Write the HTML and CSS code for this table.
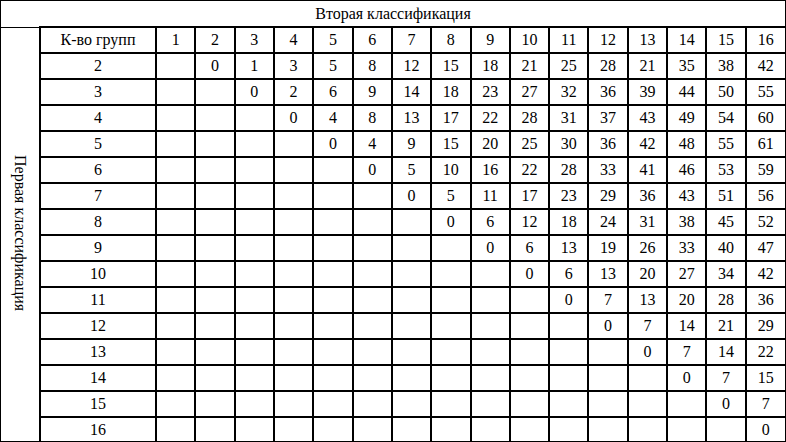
FILE: index.html
```html
<!DOCTYPE html>
<html lang="ru">
<head>
<meta charset="utf-8">
<title>Классификация</title>
<link rel="stylesheet" href="styles.css">
</head>
<body>
<div class="frame">
<table class="grid">
<colgroup>
<col class="c-side"><col class="c-head">
<col><col><col><col><col><col><col><col><col><col><col><col><col><col><col><col>
</colgroup>
<tr class="title-row"><th colspan="18" class="title">Вторая классификация</th></tr>
<tr><td rowspan="17" class="side"><span class="vert">Первая классификация</span></td>
<td>К-во групп</td><td>1</td><td>2</td><td>3</td><td>4</td><td>5</td><td>6</td><td>7</td><td>8</td><td>9</td><td>10</td><td>11</td><td>12</td><td>13</td><td>14</td><td>15</td><td>16</td></tr>
<tr><td>2</td><td></td><td>0</td><td>1</td><td>3</td><td>5</td><td>8</td><td>12</td><td>15</td><td>18</td><td>21</td><td>25</td><td>28</td><td>21</td><td>35</td><td>38</td><td>42</td></tr>
<tr><td>3</td><td></td><td></td><td>0</td><td>2</td><td>6</td><td>9</td><td>14</td><td>18</td><td>23</td><td>27</td><td>32</td><td>36</td><td>39</td><td>44</td><td>50</td><td>55</td></tr>
<tr><td>4</td><td></td><td></td><td></td><td>0</td><td>4</td><td>8</td><td>13</td><td>17</td><td>22</td><td>28</td><td>31</td><td>37</td><td>43</td><td>49</td><td>54</td><td>60</td></tr>
<tr><td>5</td><td></td><td></td><td></td><td></td><td>0</td><td>4</td><td>9</td><td>15</td><td>20</td><td>25</td><td>30</td><td>36</td><td>42</td><td>48</td><td>55</td><td>61</td></tr>
<tr><td>6</td><td></td><td></td><td></td><td></td><td></td><td>0</td><td>5</td><td>10</td><td>16</td><td>22</td><td>28</td><td>33</td><td>41</td><td>46</td><td>53</td><td>59</td></tr>
<tr><td>7</td><td></td><td></td><td></td><td></td><td></td><td></td><td>0</td><td>5</td><td>11</td><td>17</td><td>23</td><td>29</td><td>36</td><td>43</td><td>51</td><td>56</td></tr>
<tr><td>8</td><td></td><td></td><td></td><td></td><td></td><td></td><td></td><td>0</td><td>6</td><td>12</td><td>18</td><td>24</td><td>31</td><td>38</td><td>45</td><td>52</td></tr>
<tr><td>9</td><td></td><td></td><td></td><td></td><td></td><td></td><td></td><td></td><td>0</td><td>6</td><td>13</td><td>19</td><td>26</td><td>33</td><td>40</td><td>47</td></tr>
<tr><td>10</td><td></td><td></td><td></td><td></td><td></td><td></td><td></td><td></td><td></td><td>0</td><td>6</td><td>13</td><td>20</td><td>27</td><td>34</td><td>42</td></tr>
<tr><td>11</td><td></td><td></td><td></td><td></td><td></td><td></td><td></td><td></td><td></td><td></td><td>0</td><td>7</td><td>13</td><td>20</td><td>28</td><td>36</td></tr>
<tr><td>12</td><td></td><td></td><td></td><td></td><td></td><td></td><td></td><td></td><td></td><td></td><td></td><td>0</td><td>7</td><td>14</td><td>21</td><td>29</td></tr>
<tr><td>13</td><td></td><td></td><td></td><td></td><td></td><td></td><td></td><td></td><td></td><td></td><td></td><td></td><td>0</td><td>7</td><td>14</td><td>22</td></tr>
<tr><td>14</td><td></td><td></td><td></td><td></td><td></td><td></td><td></td><td></td><td></td><td></td><td></td><td></td><td></td><td>0</td><td>7</td><td>15</td></tr>
<tr><td>15</td><td></td><td></td><td></td><td></td><td></td><td></td><td></td><td></td><td></td><td></td><td></td><td></td><td></td><td></td><td>0</td><td>7</td></tr>
<tr><td>16</td><td></td><td></td><td></td><td></td><td></td><td></td><td></td><td></td><td></td><td></td><td></td><td></td><td></td><td></td><td></td><td>0</td></tr>
</table>
</div>
</body>
</html>
```

FILE: styles.css
```css
html, body {
  margin: 0;
  padding: 0;
  background: #fff;
  font-family: "Liberation Serif", "Times New Roman", serif;
}

.frame {
  width: 786px;
  height: 442px;
  box-sizing: border-box;
  border: 1px solid #000;
  overflow: hidden;
}

.grid {
  width: 784px;
  border-collapse: collapse;
  border-style: hidden;
  table-layout: fixed;
  font-family: "Liberation Serif", "Times New Roman", serif;
  font-size: 16px;
  color: #000;
}

.c-side { width: 39px; }
.c-head { width: 116px; }

.grid td,
.grid th {
  border: 2px solid #000;
  height: 24px;
  padding: 0;
  text-align: center;
  vertical-align: middle;
  font-weight: normal;
  line-height: 24px;
  white-space: nowrap;
  overflow: hidden;
}

.grid .title {
  height: 25px;
  line-height: 25px;
  border-bottom: 1px solid #000;
}

.grid .side {
  border-top: 1px solid #000;
}

.vert {
  display: inline-block;
  writing-mode: vertical-rl;
  line-height: 20px;
  padding-top: 4px;
}
```
